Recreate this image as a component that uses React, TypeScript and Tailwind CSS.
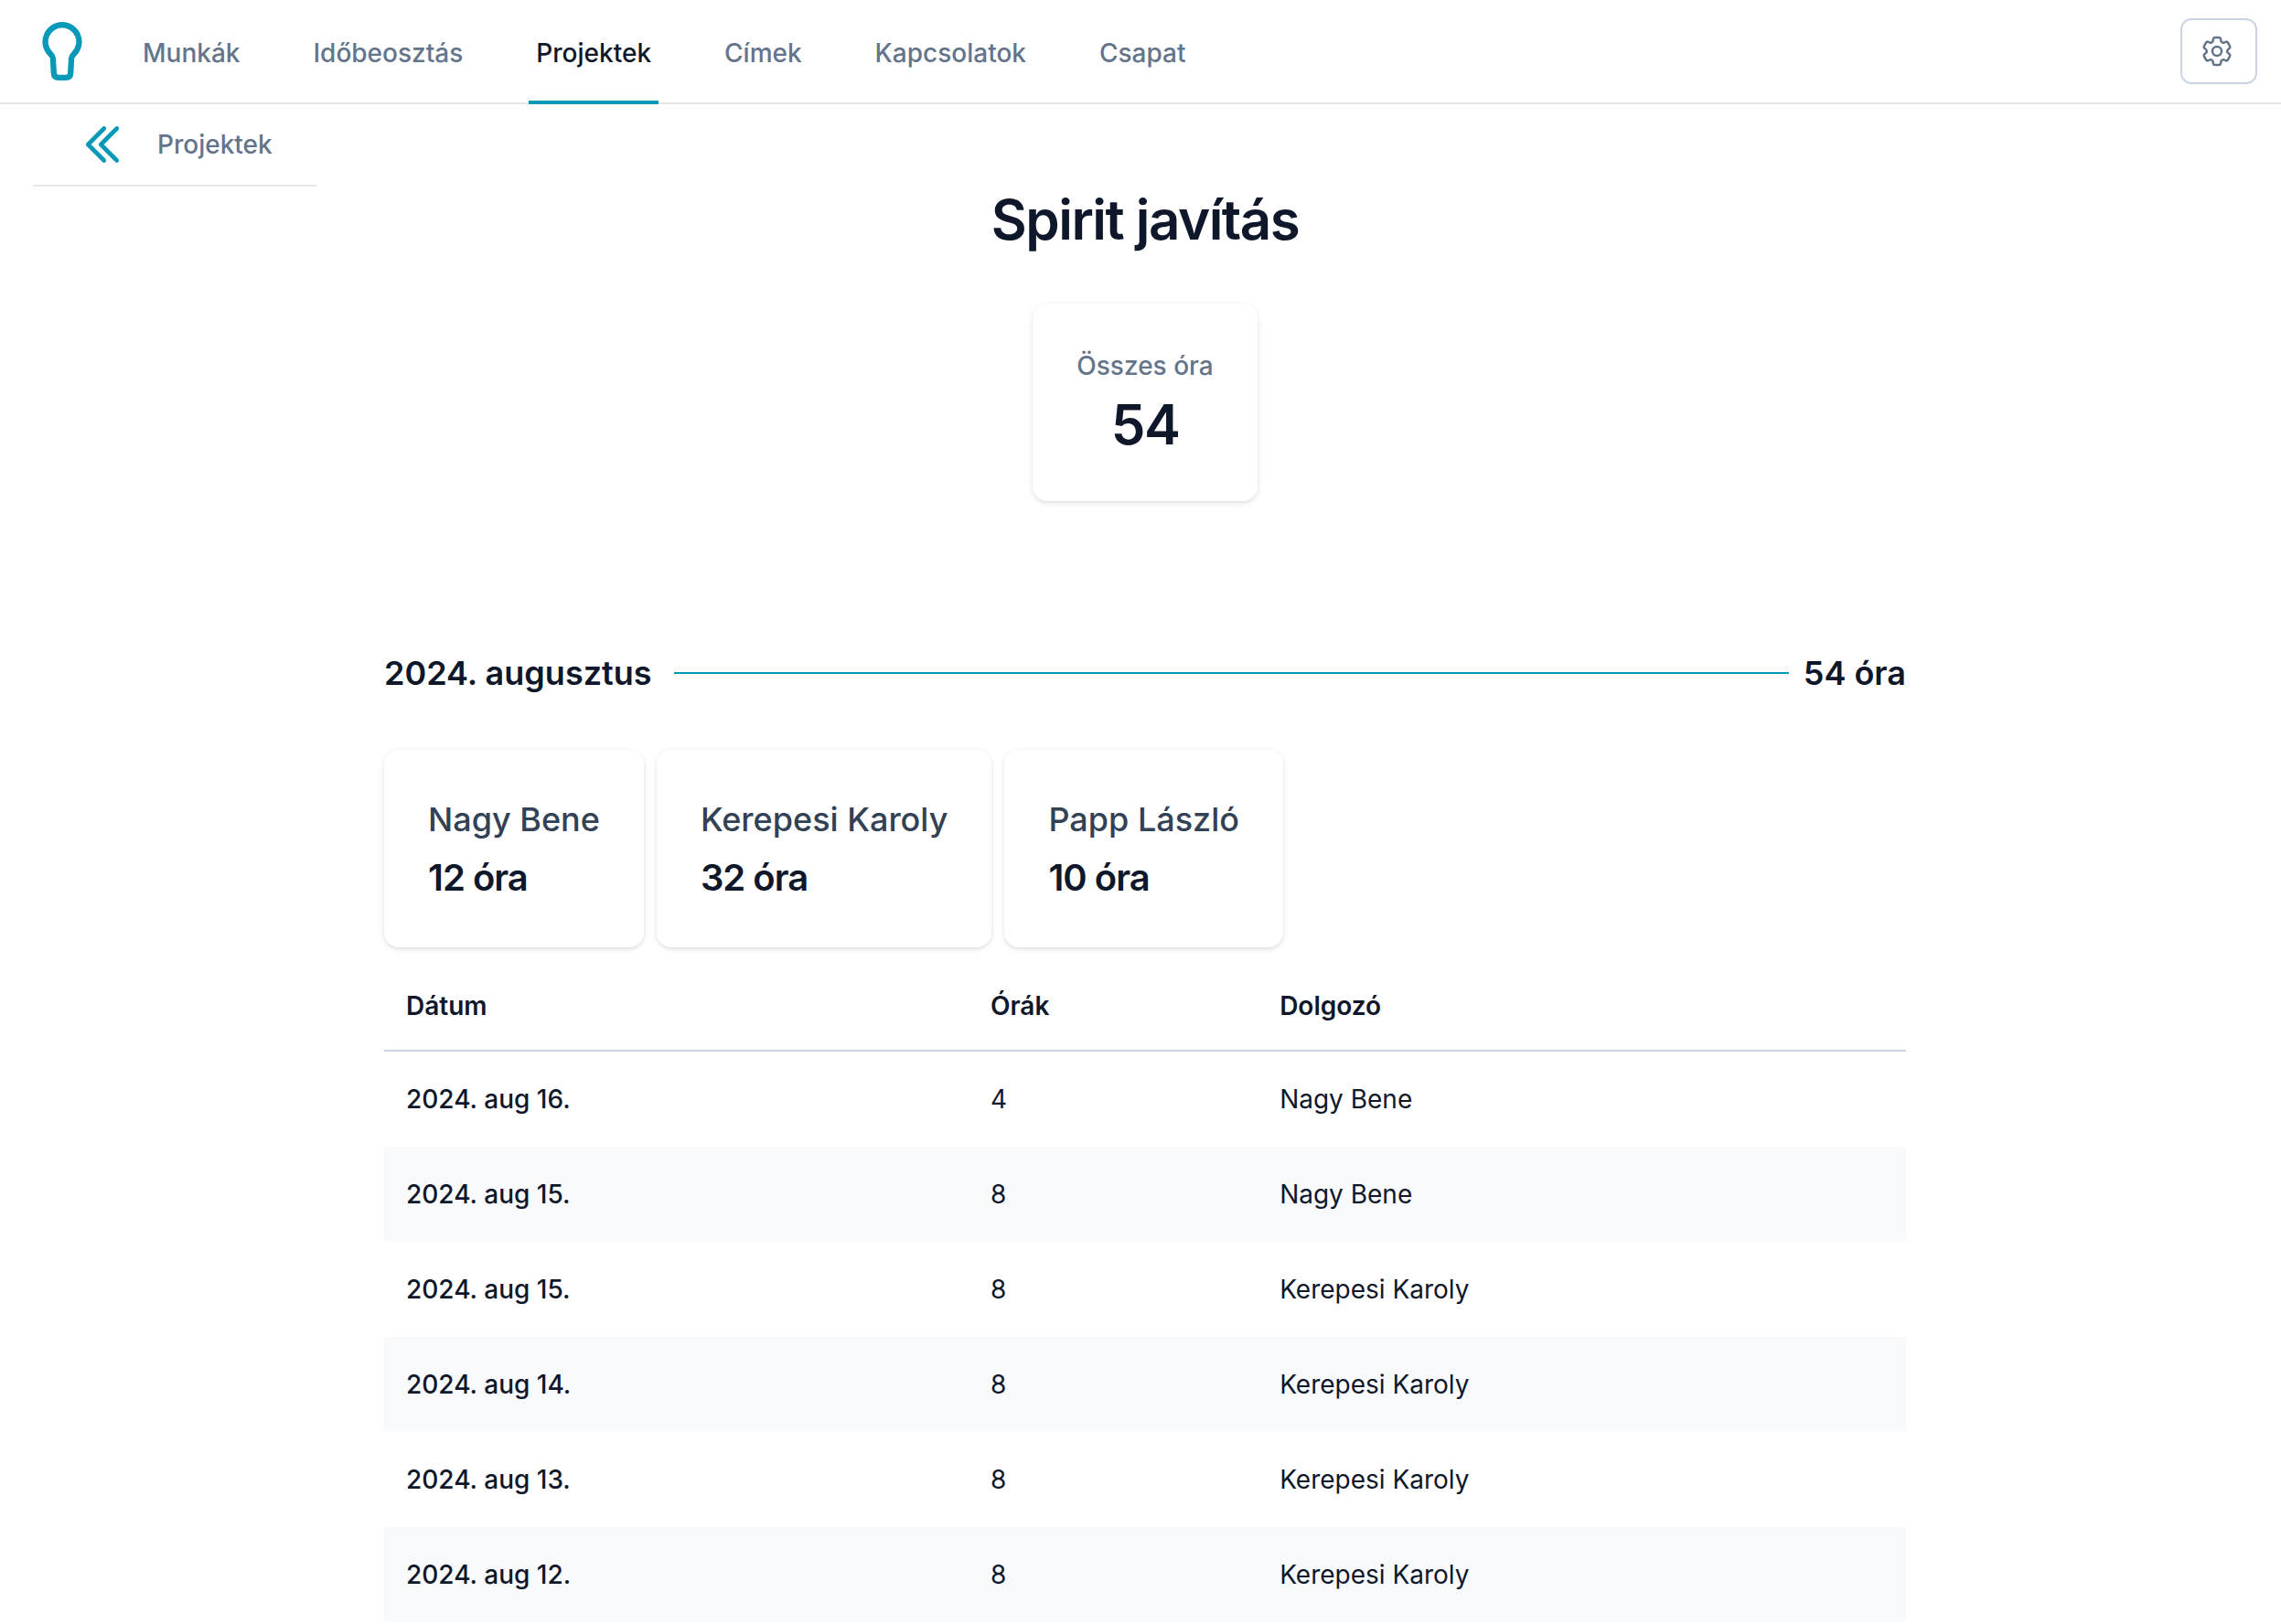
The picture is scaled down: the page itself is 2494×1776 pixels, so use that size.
import { HiOutlineChevronDoubleLeft, HiOutlineCog6Tooth } from "react-icons/hi2";

type WorkEntry = {
  id: number;
  date: string;
  hours: number;
  worker: string;
};

const navItems = [
  { name: "Munkák", href: "#munkak", current: false },
  { name: "Időbeosztás", href: "#idobeosztas", current: false },
  { name: "Projektek", href: "#projektek", current: true },
  { name: "Címek", href: "#cimek", current: false },
  { name: "Kapcsolatok", href: "#kapcsolatok", current: false },
  { name: "Csapat", href: "#csapat", current: false },
];

const entries: WorkEntry[] = [
  { id: 1, date: "2024. aug 16.", hours: 4, worker: "Nagy Bene" },
  { id: 2, date: "2024. aug 15.", hours: 8, worker: "Nagy Bene" },
  { id: 3, date: "2024. aug 15.", hours: 8, worker: "Kerepesi Karoly" },
  { id: 4, date: "2024. aug 14.", hours: 8, worker: "Kerepesi Karoly" },
  { id: 5, date: "2024. aug 13.", hours: 8, worker: "Kerepesi Karoly" },
  { id: 6, date: "2024. aug 12.", hours: 8, worker: "Kerepesi Karoly" },
];

const workerTotals = [
  { name: "Nagy Bene", hours: 12 },
  { name: "Kerepesi Karoly", hours: 32 },
  { name: "Papp László", hours: 10 },
];

function Logo() {
  return (
    <svg viewBox="0 0 44 64" className="h-16 w-11" fill="none" stroke="currentColor" strokeWidth="6.3" strokeLinejoin="round" aria-hidden="true">
      <path d="M22 3.2a18.5 18.5 0 0 0-13 31.6c2.2 2.3 2.8 3.3 2.9 5.2l.9 16c.2 3 2 4.8 5 4.8h8.4c3 0 4.8-1.8 5-4.8l.9-16c.1-1.9.7-2.9 2.9-5.2A18.5 18.5 0 0 0 22 3.2Z" />
    </svg>
  );
}

function Header() {
  return (
    <header className="flex h-[114px] items-stretch justify-between border-b-2 border-[#e5e7eb] pl-[46px] pr-[26px]">
      <div className="flex items-stretch gap-[58px]">
        <a href="#" aria-label="Kezdőlap" className="flex items-center text-[#0899b9]">
          <Logo />
        </a>
        <nav className="-mb-0.5 flex items-stretch gap-16">
          {navItems.map(item => (
            <a
              key={item.name}
              href={item.href}
              aria-current={item.current ? "page" : undefined}
              className={`flex items-center border-b-4 px-2 pt-1.5 text-[28px] leading-10 font-medium whitespace-nowrap ${item.current ? "border-[#0899b9] text-[#0f172a]" : "border-transparent text-[#64748b] hover:text-slate-700"}`}
            >
              {item.name}
            </a>
          ))}
        </nav>
      </div>

      <div className="flex items-center">
        <button
          type="button"
          aria-label="Beállítások"
          className="flex h-[72px] w-[84px] items-center justify-center rounded-xl border-2 border-[#cbd5e1] pr-1 text-[#64748b] hover:bg-slate-50"
        >
          <HiOutlineCog6Tooth className="size-10" />
        </button>
      </div>
    </header>
  );
}

export default function App() {
  const total = workerTotals.reduce((sum, w) => sum + w.hours, 0);

  return (
    <div className="min-h-screen bg-white font-['Inter',sans-serif] text-[#0f172a]">
      <Header />

      {/* Back link */}
      <div className="flex pl-9">
        <a
          href="#projektek"
          className="flex items-center gap-8 border-b-2 border-[#e5e7eb] px-12 py-4 text-[28px] leading-10 font-medium text-[#64748b]"
        >
          <HiOutlineChevronDoubleLeft className="size-14 text-[#0899b9] [stroke-width:2]" />
          Projektek
        </a>
      </div>

      <main className="pl-2.5">
        <div className="flex flex-col items-center">
          <h1 className="text-6xl/[72px] font-semibold tracking-tight">Spirit javítás</h1>
          <dl className="mt-14 flex flex-col items-center gap-2 rounded-2xl p-12 shadow-[0_2px_6px_0_rgb(0_0_0/0.1),0_2px_4px_-2px_rgb(0_0_0/0.1)]">
            <dt className="text-[28px] leading-10 font-medium text-[#64748b]">Összes óra</dt>
            <dd className="text-6xl/[72px] font-semibold tracking-tight">{total}</dd>
          </dl>
        </div>

        <section className="mx-auto mt-40 w-full max-w-[1664px]">
          <div className="flex items-center text-4xl/[56px] font-semibold">
            <h2>2024. augusztus</h2>
            <div className="ml-6 mr-4 h-0.5 flex-1 bg-[#0899b9]" />
            <span>{total} óra</span>
          </div>

          {/* Hours per worker */}
          <div className="mt-14 flex flex-wrap gap-3.5">
            {workerTotals.map(worker => (
              <dl
                key={worker.name}
                className="flex flex-col gap-2 rounded-2xl p-12 shadow-[0_2px_6px_0_rgb(0_0_0/0.1),0_2px_4px_-2px_rgb(0_0_0/0.1)]"
              >
                <dt className="text-4xl/[56px] font-medium text-[#334155]">{worker.name}</dt>
                <dd className="text-[40px] leading-[56px] font-semibold tracking-tight">{worker.hours} óra</dd>
              </dl>
            ))}
          </div>

          <table className="mt-4 w-full table-fixed border-collapse text-left text-[28px] leading-10">
            <thead>
              <tr className="border-b-2 border-[#cbd5e1]">
                <th scope="col" className="w-[38.4%] px-6 py-7 font-semibold">Dátum</th>
                <th scope="col" className="w-[19%] px-6 py-7 font-semibold">Órák</th>
                <th scope="col" className="px-6 py-7 font-semibold">Dolgozó</th>
              </tr>
            </thead>
            <tbody>
              {entries.map(entry => (
                <tr key={entry.id} className="even:bg-slate-50">
                  <td className="px-6 py-8 font-medium">{entry.date}</td>
                  <td className="px-6 py-8">{entry.hours}</td>
                  <td className="px-6 py-8">{entry.worker}</td>
                </tr>
              ))}
            </tbody>
          </table>
        </section>
      </main>
    </div>
  );
}
